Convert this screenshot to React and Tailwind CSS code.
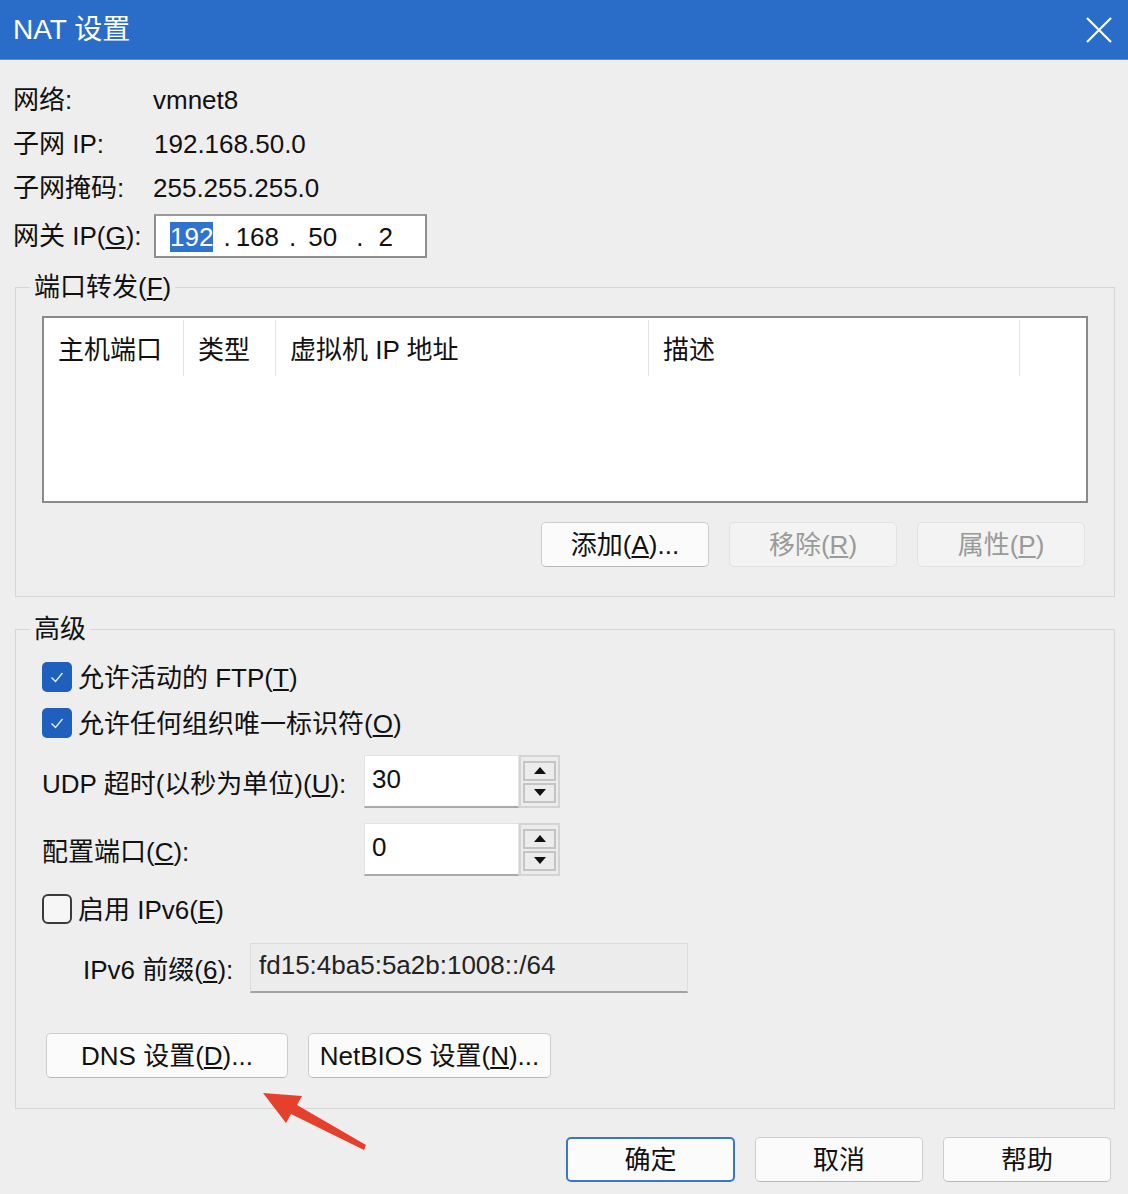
import React from "react";

const Btn = ({ children, disabled, primary, className = "" }) => (
  <div
    className={
      "flex items-center justify-center h-[45px] rounded-[5px] text-[26px] pt-[2px] " +
      (disabled
        ? "border border-[#e2e2e2] bg-[#f3f3f3] text-[#9a9a9a] "
        : primary
        ? "border-2 border-[#3a76c9] bg-[#fbfbfb] text-[#111] "
        : "border border-[#cdcdcd] border-b-[#b8b8b8] bg-[#fbfbfb] text-[#111] ") +
      className
    }
  >
    {children}
  </div>
);

const Checked = () => (
  <div className="w-[30px] h-[30px] rounded-[5px] bg-[#1f5fbe] flex items-center justify-center shrink-0">
    <svg width="18" height="18" viewBox="0 0 18 18">
      <path d="M3.5 9.5 L7.5 13.5 L14.5 5" fill="none" stroke="#dfe9f8" strokeWidth="1.5" />
    </svg>
  </div>
);

const Unchecked = () => (
  <div className="w-[30px] h-[30px] rounded-[6px] border-2 border-[#3a3a3a] bg-[#f6f6f6] shrink-0" />
);

const Spin = ({ value }) => (
  <div className="flex h-[53px] w-[196px]">
    <div className="flex-1 bg-white border border-[#e3e3e3] border-b-2 border-b-[#a9a9a9] pl-[7px] pt-[6px] text-[26px] leading-[34px] text-[#111]">
      {value}
    </div>
    <div className="w-[41px] border-2 border-[#d4d4d4] bg-[#ececec] flex flex-col items-center justify-center gap-[2px] py-[2px]">
      <div className="w-[33px] h-[20px] border-2 border-[#c4c4c4] bg-[#ececec] flex items-center justify-center">
        <svg width="12" height="7" viewBox="0 0 12 7">
          <path d="M0 7 L6 0 L12 7 Z" fill="#111" />
        </svg>
      </div>
      <div className="w-[33px] h-[20px] border-2 border-[#c4c4c4] bg-[#ececec] flex items-center justify-center">
        <svg width="12" height="7" viewBox="0 0 12 7">
          <path d="M0 0 L12 0 L6 7 Z" fill="#111" />
        </svg>
      </div>
    </div>
  </div>
);

export default function App() {
  return (
    <div className="relative w-[1128px] h-[1194px] bg-[#eeeeee] overflow-hidden text-[#111] font-[family-name:'Liberation_Sans','Noto_Sans_CJK_SC',sans-serif]">
      {/* Title bar */}
      <div className="h-[60px] bg-[#2a6dc9] flex items-center justify-between border-b border-[#5a8fd6]">
        <span className="pl-[13px] text-white text-[28px] leading-none">NAT 设置</span>
        <svg width="30" height="30" viewBox="0 0 30 30" className="mr-[14px]">
          <path d="M3 3 L27 27 M27 3 L3 27" stroke="#fff" strokeWidth="2.2" />
        </svg>
      </div>

      {/* Info rows */}
      <div className="pt-[18px] pl-[13px] text-[26px]">
        <div className="flex items-center h-[44px]">
          <span className="w-[140px]">网络:</span>
          <span>vmnet8</span>
        </div>
        <div className="flex items-center h-[44px]">
          <span className="w-[141px]">子网 IP:</span>
          <span>192.168.50.0</span>
        </div>
        <div className="flex items-center h-[44px]">
          <span className="w-[140px]">子网掩码:</span>
          <span>255.255.255.0</span>
        </div>
        <div className="flex items-center h-[44px] mt-[4px]">
          <span className="w-[141px]">
            网关 IP(<u>G</u>):
          </span>
          <div className="w-[273px] h-[44px] bg-white border-2 border-[#8e8e8e] border-t-[#9a9a9a] flex items-center pl-[14px] pt-[2px] text-[26px]">
            <span className="bg-[#2f73cf] text-white leading-[30px]">192</span>
            <span className="ml-[10px]">.</span>
            <span className="ml-[5px]">168</span>
            <span className="ml-[10px]">.</span>
            <span className="ml-[12px]">50</span>
            <span className="ml-[19px]">.</span>
            <span className="ml-[15px]">2</span>
          </div>
        </div>
      </div>

      {/* Port forwarding group */}
      <fieldset className="ml-[15px] mt-[14px] w-[1100px] border border-[#d6d6d6] p-0 m-0">
        <legend className="ml-[14px] px-[4px] text-[26px] leading-[30px]">
          端口转发(<u>F</u>)
        </legend>
        <div className="pl-[26px] pt-[14px] pb-[29px]">
          <div className="w-[1046px] h-[187px] bg-white border-2 border-[#8a8a8a]">
            <div className="flex h-[58px] text-[26px]">
              <div className="w-[140px] flex items-center pl-[14px] pt-[4px] border-r border-[#e4e4e4] mt-[2px]">主机端口</div>
              <div className="w-[92px] flex items-center pl-[14px] pt-[4px] border-r border-[#e4e4e4] mt-[2px]">类型</div>
              <div className="w-[373px] flex items-center pl-[14px] pt-[4px] border-r border-[#e4e4e4] mt-[2px]">虚拟机 IP 地址</div>
              <div className="w-[371px] flex items-center pl-[14px] pt-[4px] border-r border-[#e4e4e4] mt-[2px]">描述</div>
            </div>
          </div>
          <div className="flex justify-end gap-[20px] mt-[19px] pr-[29px]">
            <Btn className="w-[168px]">
              添加(<u>A</u>)...
            </Btn>
            <Btn disabled className="w-[168px]">
              移除(<u>R</u>)
            </Btn>
            <Btn disabled className="w-[168px]">
              属性(<u>P</u>)
            </Btn>
          </div>
        </div>
      </fieldset>

      {/* Advanced group */}
      <fieldset className="ml-[15px] mt-[17px] w-[1100px] border border-[#d6d6d6] p-0 m-0">
        <legend className="ml-[14px] px-[4px] text-[26px] leading-[30px]">高级</legend>
        <div className="pl-[26px] pb-[30px] text-[26px]">
          <div className="flex items-center h-[46px] mt-[10px] gap-[6px]">
            <Checked />
            <span className="pt-[2px]">
              允许活动的 FTP(<u>T</u>)
            </span>
          </div>
          <div className="flex items-center h-[46px] gap-[6px]">
            <Checked />
            <span className="pt-[2px]">
              允许任何组织唯一标识符(<u>O</u>)
            </span>
          </div>
          <div className="flex items-center h-[53px] mt-[9px]">
            <span className="w-[322px] pt-[5px]">
              UDP 超时(以秒为单位)(<u>U</u>):
            </span>
            <Spin value="30" />
          </div>
          <div className="flex items-center h-[53px] mt-[15px]">
            <span className="w-[322px] pt-[5px]">
              配置端口(<u>C</u>):
            </span>
            <Spin value="0" />
          </div>
          <div className="flex items-center h-[46px] mt-[10px] gap-[6px]">
            <Unchecked />
            <span className="pt-[2px]">
              启用 IPv6(<u>E</u>)
            </span>
          </div>
          <div className="flex items-center h-[50px] mt-[11px] pl-[41px]">
            <span className="w-[167px] pt-[4px]">
              IPv6 前缀(<u>6</u>):
            </span>
            <div className="w-[438px] h-[50px] bg-[#ececec] border border-[#dcdcdc] border-b-2 border-b-[#a2a2a2] pl-[8px] pt-[4px] leading-[34px] text-[#222]">
              fd15:4ba5:5a2b:1008::/64
            </div>
          </div>
          <div className="flex gap-[20px] mt-[40px] pl-[4px]">
            <Btn className="w-[242px] h-[44px]">
              DNS 设置(<u>D</u>)...
            </Btn>
            <Btn className="w-[243px] h-[44px]">
              NetBIOS 设置(<u>N</u>)...
            </Btn>
          </div>
        </div>
      </fieldset>

      {/* Bottom buttons */}
      <div className="flex justify-end gap-[20px] mt-[28px] pr-[17px]">
        <Btn primary className="w-[169px]">确定</Btn>
        <Btn className="w-[168px]">取消</Btn>
        <Btn className="w-[168px]">帮助</Btn>
      </div>

      {/* Red arrow annotation */}
      <svg
        className="absolute left-[255px] top-[1085px]"
        width="120"
        height="72"
        viewBox="0 0 120 72"
      >
        <path
          d="M8 8 L47 11 L42 20 L111 60 L109 65 L36 29 L31 38 Z"
          fill="#e5402b"
        />
      </svg>
    </div>
  );
}
